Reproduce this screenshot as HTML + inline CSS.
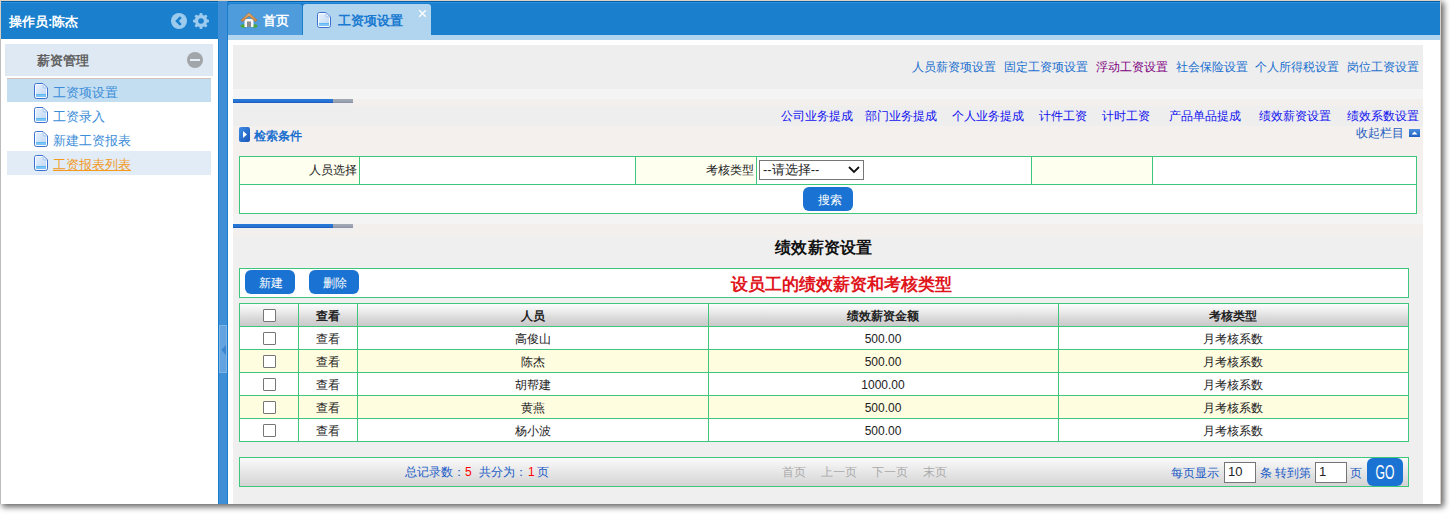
<!DOCTYPE html>
<html><head><meta charset="utf-8">
<style>
*{margin:0;padding:0;box-sizing:border-box}
html,body{width:1450px;height:514px;overflow:hidden;background:#fff;font-family:"Liberation Sans",sans-serif;font-size:12px;color:#333}
.a{position:absolute}
.t{position:absolute;white-space:nowrap;line-height:16px}
</style></head><body>
<!-- shadow -->
<div class="a" style="left:1px;top:1px;width:1440px;height:503px;background:#fff;box-shadow:2px 2px 6px 1px rgba(0,0,0,0.6)"></div>
<!-- frame -->
<div class="a" style="left:0;top:0;width:1441px;height:1px;background:#dcd2c7"></div>
<div class="a" style="left:0;top:0;width:1px;height:39px;background:#d9cfc5"></div>
<div class="a" style="left:0;top:39px;width:1px;height:465px;background:#bcbcbc"></div>
<div class="a" style="left:1440px;top:1px;width:1px;height:503px;background:#d8d0c8"></div>
<!-- left header -->
<div class="a" style="left:1px;top:1px;width:1439px;height:34px;background:#1a7fcd"></div>
<div class="a" style="left:1px;top:1px;width:1439px;height:1px;background:#0a5ca3"></div>
<div class="a" style="left:1px;top:2px;width:1439px;height:1px;background:#2a92e4"></div>
<div class="a" style="left:1px;top:35px;width:217px;height:4px;background:#1a7fcd"></div>
<div class="t" style="left:9px;top:14px;font-size:13px;font-weight:bold;color:#fff">操作员:陈杰</div>


<svg class="a" style="left:171px;top:13px" width="16" height="16" viewBox="0 0 16 16"><circle cx="8" cy="8" r="8" fill="#9ccbee"/><path d="M9.8 4.2 L6 8 L9.8 11.8" fill="none" stroke="#1a7fcd" stroke-width="2.6"/></svg>
<svg class="a" style="left:193px;top:13px" width="16" height="16" viewBox="0 0 16 16"><g fill="#9ccbee"><circle cx="8" cy="8" r="6.2"/><g id="th"><rect x="6.5" y="0" width="3" height="3" rx="1"/><rect x="6.5" y="13" width="3" height="3" rx="1"/><rect x="0" y="6.5" width="3" height="3" rx="1"/><rect x="13" y="6.5" width="3" height="3" rx="1"/></g><g transform="rotate(45 8 8)"><rect x="6.5" y="0" width="3" height="3" rx="1"/><rect x="6.5" y="13" width="3" height="3" rx="1"/><rect x="0" y="6.5" width="3" height="3" rx="1"/><rect x="13" y="6.5" width="3" height="3" rx="1"/></g></g><circle cx="8" cy="8" r="2.8" fill="#1a7fcd"/></svg>
<!-- left panel body -->
<div class="a" style="left:1px;top:39px;width:217px;height:465px;background:#fff"></div>
<div class="a" style="left:5px;top:44px;width:208px;height:32px;background:#dfe9f3"></div>
<div class="t" style="left:37px;top:53px;font-size:13px;font-weight:bold;color:#606060">薪资管理</div>
<div class="a" style="left:187px;top:52px;width:16px;height:16px;border-radius:50%;background:#a3a6a9"></div>
<div class="a" style="left:190px;top:59px;width:10px;height:2px;background:#e6f0f8"></div>
<!-- items -->
<div class="a" style="left:7px;top:78px;width:204px;height:24px;background:#c3ddf1;border-top:1px solid #cfc3ba"></div>
<div class="a" style="left:7px;top:151px;width:204px;height:24px;background:#e1ecf7"></div>
<svg class="a" style="left:34px;top:83px" width="14" height="16" viewBox="0 0 14 16"><defs><linearGradient id="pg34_83" x1="0" y1="0" x2="1" y2="1"><stop offset="0" stop-color="#eaf3fd"/><stop offset="1" stop-color="#b9d3f2"/></linearGradient></defs><path d="M0.5 2.5 Q0.5 0.5 2.5 0.5 H9 L13.5 5 V13.5 Q13.5 15.5 11.5 15.5 H2.5 Q0.5 15.5 0.5 13.5 Z" fill="url(#pg34_83)" stroke="#3d6fce" stroke-width="1"/><path d="M1.5 2.5 Q1.5 1.5 2.5 1.5 H8.6 L12.5 5.4 V13.5 Q12.5 14.5 11.5 14.5 H2.5 Q1.5 14.5 1.5 13.5 Z" fill="none" stroke="#fff" stroke-width="0.9"/><path d="M9 0.8 L9.3 4.7 L13.2 5 Z" fill="#f4f8fd" stroke="#8fb3e6" stroke-width="0.7"/><rect x="2" y="11" width="10" height="2.6" fill="#52b2f4"/><rect x="2" y="11.8" width="10" height="0.9" fill="#8fd0fa"/></svg><svg class="a" style="left:34px;top:107px" width="14" height="16" viewBox="0 0 14 16"><defs><linearGradient id="pg34_107" x1="0" y1="0" x2="1" y2="1"><stop offset="0" stop-color="#eaf3fd"/><stop offset="1" stop-color="#b9d3f2"/></linearGradient></defs><path d="M0.5 2.5 Q0.5 0.5 2.5 0.5 H9 L13.5 5 V13.5 Q13.5 15.5 11.5 15.5 H2.5 Q0.5 15.5 0.5 13.5 Z" fill="url(#pg34_107)" stroke="#3d6fce" stroke-width="1"/><path d="M1.5 2.5 Q1.5 1.5 2.5 1.5 H8.6 L12.5 5.4 V13.5 Q12.5 14.5 11.5 14.5 H2.5 Q1.5 14.5 1.5 13.5 Z" fill="none" stroke="#fff" stroke-width="0.9"/><path d="M9 0.8 L9.3 4.7 L13.2 5 Z" fill="#f4f8fd" stroke="#8fb3e6" stroke-width="0.7"/><rect x="2" y="11" width="10" height="2.6" fill="#52b2f4"/><rect x="2" y="11.8" width="10" height="0.9" fill="#8fd0fa"/></svg><svg class="a" style="left:34px;top:131px" width="14" height="16" viewBox="0 0 14 16"><defs><linearGradient id="pg34_131" x1="0" y1="0" x2="1" y2="1"><stop offset="0" stop-color="#eaf3fd"/><stop offset="1" stop-color="#b9d3f2"/></linearGradient></defs><path d="M0.5 2.5 Q0.5 0.5 2.5 0.5 H9 L13.5 5 V13.5 Q13.5 15.5 11.5 15.5 H2.5 Q0.5 15.5 0.5 13.5 Z" fill="url(#pg34_131)" stroke="#3d6fce" stroke-width="1"/><path d="M1.5 2.5 Q1.5 1.5 2.5 1.5 H8.6 L12.5 5.4 V13.5 Q12.5 14.5 11.5 14.5 H2.5 Q1.5 14.5 1.5 13.5 Z" fill="none" stroke="#fff" stroke-width="0.9"/><path d="M9 0.8 L9.3 4.7 L13.2 5 Z" fill="#f4f8fd" stroke="#8fb3e6" stroke-width="0.7"/><rect x="2" y="11" width="10" height="2.6" fill="#52b2f4"/><rect x="2" y="11.8" width="10" height="0.9" fill="#8fd0fa"/></svg><svg class="a" style="left:34px;top:155px" width="14" height="16" viewBox="0 0 14 16"><defs><linearGradient id="pg34_155" x1="0" y1="0" x2="1" y2="1"><stop offset="0" stop-color="#eaf3fd"/><stop offset="1" stop-color="#b9d3f2"/></linearGradient></defs><path d="M0.5 2.5 Q0.5 0.5 2.5 0.5 H9 L13.5 5 V13.5 Q13.5 15.5 11.5 15.5 H2.5 Q0.5 15.5 0.5 13.5 Z" fill="url(#pg34_155)" stroke="#3d6fce" stroke-width="1"/><path d="M1.5 2.5 Q1.5 1.5 2.5 1.5 H8.6 L12.5 5.4 V13.5 Q12.5 14.5 11.5 14.5 H2.5 Q1.5 14.5 1.5 13.5 Z" fill="none" stroke="#fff" stroke-width="0.9"/><path d="M9 0.8 L9.3 4.7 L13.2 5 Z" fill="#f4f8fd" stroke="#8fb3e6" stroke-width="0.7"/><rect x="2" y="11" width="10" height="2.6" fill="#52b2f4"/><rect x="2" y="11.8" width="10" height="0.9" fill="#8fd0fa"/></svg>
<div class="t" style="left:53px;top:85px;font-size:13px;color:#3b8dd8">工资项设置</div>
<div class="t" style="left:53px;top:109px;font-size:13px;color:#3b8dd8">工资录入</div>
<div class="t" style="left:53px;top:133px;font-size:13px;color:#3b8dd8">新建工资报表</div>
<div class="t" style="left:53px;top:157px;font-size:13px;color:#f39a1e;text-decoration:underline">工资报表列表</div>

<!-- splitter -->
<div class="a" style="left:218px;top:1px;width:10px;height:503px;background:#3f8fd6"></div>
<div class="a" style="left:227px;top:1px;width:1px;height:503px;background:#1a7dcc"></div>
<div class="a" style="left:218px;top:39px;width:1px;height:465px;background:#1a7dcc"></div>
<div class="a" style="left:219px;top:325px;width:8px;height:48px;background:#62a3e0;border:1px solid #7fb5e6"></div>
<svg class="a" style="left:221px;top:345px" width="5" height="10"><path d="M5 0 L0.3 5 L5 10 Z" fill="#3b86cf"/></svg>

<!-- tabs -->
<div class="a" style="left:228px;top:4px;width:74px;height:31px;background:#4f9cdc;border-radius:3px 3px 0 0"></div>
<div class="a" style="left:303px;top:4px;width:128px;height:31px;background:#b1d4ef;border-radius:3px 3px 0 0"></div>
<div class="a" style="left:228px;top:35px;width:1212px;height:5px;background:#b1d4ef"></div>
<div class="t" style="left:263px;top:13px;font-size:13px;font-weight:bold;color:#fff">首页</div>
<div class="t" style="left:338px;top:13px;font-size:13px;font-weight:bold;color:#1a7ad0">工资项设置</div>
<svg class="a" style="left:418px;top:9px" width="9" height="9"><path d="M1.2 1.2 L7.8 7.8 M7.8 1.2 L1.2 7.8" stroke="#fff" stroke-width="1.3"/></svg>
<svg class="a" style="left:240px;top:12px" width="18" height="16" viewBox="0 0 18 16"><defs><linearGradient id="rf" x1="0" y1="0" x2="0" y2="1"><stop offset="0" stop-color="#e8b070"/><stop offset="1" stop-color="#c8843e"/></linearGradient></defs><ellipse cx="3.5" cy="14" rx="3" ry="1.7" fill="#4ca63a"/><ellipse cx="14.5" cy="14" rx="3" ry="1.7" fill="#4ca63a"/><rect x="4.5" y="7" width="9" height="8" fill="#f6f6f6"/><rect x="7" y="9.5" width="4" height="5.5" fill="#8a8a8a"/><path d="M0.8 8.2 L9 0.8 L17.2 8.2 L15.6 9.8 L9 4 L2.4 9.8 Z" fill="url(#rf)" stroke="#a56a30" stroke-width="0.6"/></svg><svg class="a" style="left:317px;top:12px" width="14" height="16" viewBox="0 0 14 16"><defs><linearGradient id="pg317_12" x1="0" y1="0" x2="1" y2="1"><stop offset="0" stop-color="#eaf3fd"/><stop offset="1" stop-color="#b9d3f2"/></linearGradient></defs><path d="M0.5 2.5 Q0.5 0.5 2.5 0.5 H9 L13.5 5 V13.5 Q13.5 15.5 11.5 15.5 H2.5 Q0.5 15.5 0.5 13.5 Z" fill="url(#pg317_12)" stroke="#3d6fce" stroke-width="1"/><path d="M1.5 2.5 Q1.5 1.5 2.5 1.5 H8.6 L12.5 5.4 V13.5 Q12.5 14.5 11.5 14.5 H2.5 Q1.5 14.5 1.5 13.5 Z" fill="none" stroke="#fff" stroke-width="0.9"/><path d="M9 0.8 L9.3 4.7 L13.2 5 Z" fill="#f4f8fd" stroke="#8fb3e6" stroke-width="0.7"/><rect x="2" y="11" width="10" height="2.6" fill="#52b2f4"/><rect x="2" y="11.8" width="10" height="0.9" fill="#8fd0fa"/></svg>

<!-- content -->
<div class="a" style="left:228px;top:40px;width:1212px;height:464px;background:#fff"></div>
<div class="a" style="left:233px;top:45px;width:1190px;height:459px;background:#efefef"></div>
<div class="a" style="left:233px;top:45px;width:1190px;height:44px;background:#eeeeee"></div>
<div class="a" style="left:233px;top:89px;width:1190px;height:10px;background:#f4f4f4"></div>
<div class="a" style="left:233px;top:99px;width:1190px;height:7px;background:#f3efec"></div>
<div class="a" style="left:233px;top:106px;width:1190px;height:20px;background:#eeeeee"></div>
<div class="a" style="left:233px;top:126px;width:1190px;height:88px;background:#f3f0ee"></div>
<div class="a" style="left:233px;top:214px;width:1190px;height:10px;background:#f4f4f4"></div>
<div class="a" style="left:233px;top:224px;width:1190px;height:14px;background:#f3efec"></div>
<div class="a" style="left:233px;top:238px;width:1190px;height:266px;background:#efefef"></div>
<div class="a" style="left:233px;top:103px;width:121px;height:3px;background:#efefef"></div>
<div class="a" style="left:233px;top:228px;width:121px;height:3px;background:#efefef"></div>
<div class="a" style="left:233px;top:99px;width:100px;height:4px;background:linear-gradient(#2479d8,#2a74d2 60%,#1a55bb)"></div>
<div class="a" style="left:333px;top:99px;width:20px;height:4px;background:linear-gradient(#a3abb6,#9aa2b0 60%,#8a8ca6)"></div>
<div class="a" style="left:233px;top:224px;width:100px;height:4px;background:linear-gradient(#2479d8,#2a74d2 60%,#1a55bb)"></div>
<div class="a" style="left:333px;top:224px;width:20px;height:4px;background:linear-gradient(#a3abb6,#9aa2b0 60%,#8a8ca6)"></div>

<div class="t" style="left:912px;top:59px;color:#1a6fcf">人员薪资项设置</div>
<div class="t" style="left:1004px;top:59px;color:#1a6fcf">固定工资项设置</div>
<div class="t" style="left:1096px;top:59px;color:#800080">浮动工资设置</div>
<div class="t" style="left:1176px;top:59px;color:#1a6fcf">社会保险设置</div>
<div class="t" style="left:1255px;top:59px;color:#1a6fcf">个人所得税设置</div>
<div class="t" style="left:1347px;top:59px;color:#1a6fcf">岗位工资设置</div>
<div class="t" style="left:781px;top:108px;color:#1010f0">公司业务提成</div>
<div class="t" style="left:865px;top:108px;color:#1010f0">部门业务提成</div>
<div class="t" style="left:952px;top:108px;color:#1010f0">个人业务提成</div>
<div class="t" style="left:1039px;top:108px;color:#1010f0">计件工资</div>
<div class="t" style="left:1102px;top:108px;color:#1010f0">计时工资</div>
<div class="t" style="left:1169px;top:108px;color:#1010f0">产品单品提成</div>
<div class="t" style="left:1259px;top:108px;color:#1010f0">绩效薪资设置</div>
<div class="t" style="left:1347px;top:108px;color:#1010f0">绩效系数设置</div>
<div class="t" style="left:1356px;top:125px;color:#1f5fbf">收起栏目</div>
<svg class="a" style="left:1409px;top:129px" width="11" height="8"><defs><linearGradient id="cg" x1="0" y1="0" x2="0" y2="1"><stop offset="0" stop-color="#4a8fe0"/><stop offset="1" stop-color="#1f5fc0"/></linearGradient></defs><rect width="11" height="8" fill="url(#cg)"/><path d="M2.5 5.5 L5.5 2.5 L8.5 5.5 Z" fill="#fff"/></svg>
<svg class="a" style="left:239px;top:127px" width="11" height="15"><defs><linearGradient id="sg" x1="0" y1="0" x2="1" y2="1"><stop offset="0" stop-color="#3d8de6"/><stop offset="1" stop-color="#1a55b8"/></linearGradient></defs><rect width="11" height="15" rx="2" fill="url(#sg)"/><path d="M4 4 L8 7.5 L4 11 Z" fill="#fff"/></svg>
<div class="t" style="left:254px;top:128px;font-weight:bold;color:#1a6fcf">检索条件</div>
<div class="a" style="left:239px;top:156px;width:1178px;height:58px;background:#fff;border:1px solid #3ec77a"></div>
<div class="a" style="left:240px;top:157px;width:119px;height:27px;background:#fffff0"></div>
<div class="a" style="left:636px;top:157px;width:120px;height:27px;background:#fffff0"></div>
<div class="a" style="left:1032px;top:157px;width:120px;height:27px;background:#fffff0"></div>
<div class="a" style="left:239px;top:184px;width:1178px;height:1px;background:#3ec77a"></div>
<div class="a" style="left:359px;top:156px;width:1px;height:29px;background:#3ec77a"></div>
<div class="a" style="left:635px;top:156px;width:1px;height:29px;background:#3ec77a"></div>
<div class="a" style="left:756px;top:156px;width:1px;height:29px;background:#3ec77a"></div>
<div class="a" style="left:1031px;top:156px;width:1px;height:29px;background:#3ec77a"></div>
<div class="a" style="left:1152px;top:156px;width:1px;height:29px;background:#3ec77a"></div>
<div class="t" style="left:309px;top:162px;color:#222">人员选择</div>
<div class="t" style="left:706px;top:162px;color:#222">考核类型</div>
<div class="a" style="left:759px;top:160px;width:105px;height:20px;border:1px solid #767676;background:#fff"></div>
<div class="t" style="left:763px;top:162px;font-size:13px;color:#222">--请选择--</div>
<svg class="a" style="left:848px;top:166px" width="12" height="8"><path d="M1 1 L6 6 L11 1" fill="none" stroke="#111" stroke-width="1.8"/></svg>
<div class="a" style="left:803px;top:187px;width:50px;height:24px;background:#1a73d2;border-radius:6px"></div>
<div class="t" style="left:818px;top:192px;color:#fff">搜索</div>
<div class="t" style="left:775px;top:239px;font-size:16px;line-height:18px;font-weight:bold;color:#111;letter-spacing:0.3px">绩效薪资设置</div>
<div class="a" style="left:239px;top:268px;width:1170px;height:30px;background:#fff;border:1px solid #3ec77a"></div>
<div class="a" style="left:245px;top:270px;width:50px;height:24px;background:#1a73d2;border-radius:6px"></div>
<div class="t" style="left:259px;top:275px;color:#fff">新建</div>
<div class="a" style="left:309px;top:270px;width:50px;height:24px;background:#1a73d2;border-radius:6px"></div>
<div class="t" style="left:323px;top:275px;color:#fff">删除</div>
<div class="t" style="left:731px;top:276px;font-size:17px;line-height:18px;font-weight:bold;color:#e0161c">设员工的绩效薪资和考核类型</div>
<div class="a" style="left:239px;top:303px;width:1170px;height:139px;background:#fff;border:1px solid #3ec77a"></div>
<div class="a" style="left:240px;top:304px;width:1168px;height:22px;background:linear-gradient(#fdfdfd,#eeeeee 30%,#d9d9d9 65%,#c9c9c9)"></div>
<div class="a" style="left:240px;top:350px;width:1168px;height:22px;background:#fffde0"></div>
<div class="a" style="left:240px;top:396px;width:1168px;height:22px;background:#fffde0"></div>
<div class="a" style="left:239px;top:326px;width:1170px;height:1px;background:#3ec77a"></div>
<div class="a" style="left:239px;top:349px;width:1170px;height:1px;background:#3ec77a"></div>
<div class="a" style="left:239px;top:372px;width:1170px;height:1px;background:#3ec77a"></div>
<div class="a" style="left:239px;top:395px;width:1170px;height:1px;background:#3ec77a"></div>
<div class="a" style="left:239px;top:418px;width:1170px;height:1px;background:#3ec77a"></div>
<div class="a" style="left:298px;top:303px;width:1px;height:139px;background:#3ec77a"></div>
<div class="a" style="left:357px;top:303px;width:1px;height:139px;background:#3ec77a"></div>
<div class="a" style="left:708px;top:303px;width:1px;height:139px;background:#3ec77a"></div>
<div class="a" style="left:1058px;top:303px;width:1px;height:139px;background:#3ec77a"></div>
<div class="a" style="left:263px;top:309px;width:13px;height:13px;border:1px solid #767676;border-radius:1px;background:#fff"></div>
<div class="t" style="left:298px;width:59px;text-align:center;top:308px;font-weight:bold;color:#222">查看</div>
<div class="t" style="left:357px;width:351px;text-align:center;top:308px;font-weight:bold;color:#222">人员</div>
<div class="t" style="left:708px;width:350px;text-align:center;top:308px;font-weight:bold;color:#222">绩效薪资金额</div>
<div class="t" style="left:1058px;width:350px;text-align:center;top:308px;font-weight:bold;color:#222">考核类型</div>
<div class="a" style="left:263px;top:332px;width:13px;height:13px;border:1px solid #767676;border-radius:1px;background:#fff"></div>
<div class="t" style="left:298px;width:59px;text-align:center;top:331px;color:#222">查看</div>
<div class="t" style="left:357px;width:351px;text-align:center;top:331px;color:#222">高俊山</div>
<div class="t" style="left:708px;width:350px;text-align:center;top:331px;color:#222">500.00</div>
<div class="t" style="left:1058px;width:350px;text-align:center;top:331px;color:#222">月考核系数</div>
<div class="a" style="left:263px;top:355px;width:13px;height:13px;border:1px solid #767676;border-radius:1px;background:#fff"></div>
<div class="t" style="left:298px;width:59px;text-align:center;top:354px;color:#222">查看</div>
<div class="t" style="left:357px;width:351px;text-align:center;top:354px;color:#222">陈杰</div>
<div class="t" style="left:708px;width:350px;text-align:center;top:354px;color:#222">500.00</div>
<div class="t" style="left:1058px;width:350px;text-align:center;top:354px;color:#222">月考核系数</div>
<div class="a" style="left:263px;top:378px;width:13px;height:13px;border:1px solid #767676;border-radius:1px;background:#fff"></div>
<div class="t" style="left:298px;width:59px;text-align:center;top:377px;color:#222">查看</div>
<div class="t" style="left:357px;width:351px;text-align:center;top:377px;color:#222">胡帮建</div>
<div class="t" style="left:708px;width:350px;text-align:center;top:377px;color:#222">1000.00</div>
<div class="t" style="left:1058px;width:350px;text-align:center;top:377px;color:#222">月考核系数</div>
<div class="a" style="left:263px;top:401px;width:13px;height:13px;border:1px solid #767676;border-radius:1px;background:#fff"></div>
<div class="t" style="left:298px;width:59px;text-align:center;top:400px;color:#222">查看</div>
<div class="t" style="left:357px;width:351px;text-align:center;top:400px;color:#222">黄燕</div>
<div class="t" style="left:708px;width:350px;text-align:center;top:400px;color:#222">500.00</div>
<div class="t" style="left:1058px;width:350px;text-align:center;top:400px;color:#222">月考核系数</div>
<div class="a" style="left:263px;top:424px;width:13px;height:13px;border:1px solid #767676;border-radius:1px;background:#fff"></div>
<div class="t" style="left:298px;width:59px;text-align:center;top:423px;color:#222">查看</div>
<div class="t" style="left:357px;width:351px;text-align:center;top:423px;color:#222">杨小波</div>
<div class="t" style="left:708px;width:350px;text-align:center;top:423px;color:#222">500.00</div>
<div class="t" style="left:1058px;width:350px;text-align:center;top:423px;color:#222">月考核系数</div>
<div class="a" style="left:239px;top:457px;width:1170px;height:30px;background:linear-gradient(#fafafa,#d4d4d4);border:1px solid #3ec77a"></div>
<div class="t" style="left:405px;top:464px;color:#1c5cc6">总记录数：</div><div class="t" style="left:465px;top:464px;color:#f00">5</div><div class="t" style="left:479px;top:464px;color:#1c5cc6">共分为：</div><div class="t" style="left:528px;top:464px;color:#f00">1</div><div class="t" style="left:537px;top:464px;color:#1c5cc6">页</div>
<div class="t" style="left:782px;top:464px;color:#aaa">首页</div>
<div class="t" style="left:821px;top:464px;color:#aaa">上一页</div>
<div class="t" style="left:872px;top:464px;color:#aaa">下一页</div>
<div class="t" style="left:923px;top:464px;color:#aaa">末页</div>
<div class="t" style="left:1171px;top:465px;color:#1c5cc6">每页显示</div>
<div class="a" style="left:1224px;top:462px;width:32px;height:21px;border:1px solid #767676;background:#fff"></div>
<div class="t" style="left:1228px;top:464px;font-size:13px;color:#222">10</div>
<div class="t" style="left:1260px;top:465px;color:#1c5cc6">条 转到第</div>
<div class="a" style="left:1315px;top:462px;width:32px;height:21px;border:1px solid #767676;background:#fff"></div>
<div class="t" style="left:1319px;top:464px;font-size:13px;color:#222">1</div>
<div class="t" style="left:1350px;top:465px;color:#1c5cc6">页</div>
<div class="a" style="left:1367px;top:458px;width:36px;height:28px;background:#1a73d2;border-radius:6px"></div>
<div class="t" style="left:1365px;width:40px;text-align:center;top:463px;font-size:16px;line-height:20px;color:#fff;transform:scale(0.76,1.24)">GO</div>
</body></html>
